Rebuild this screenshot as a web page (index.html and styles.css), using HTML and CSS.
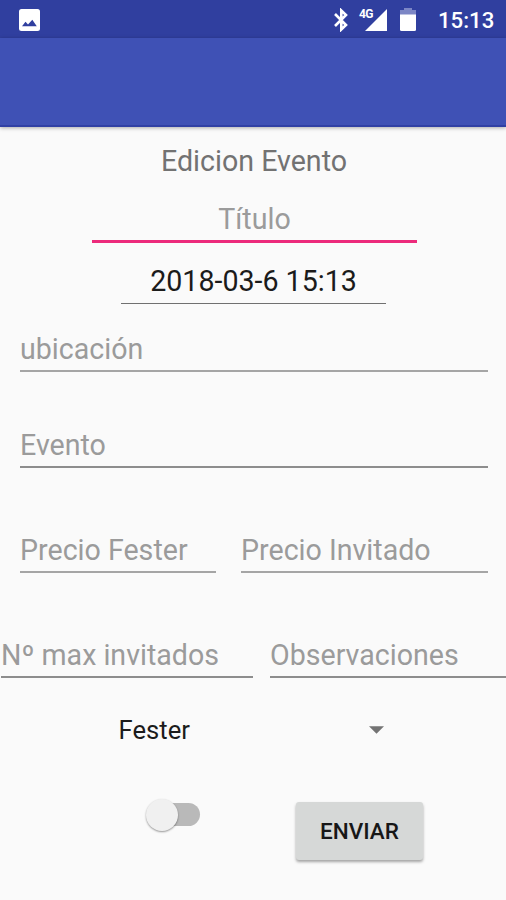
FILE: index.html
```html
<!DOCTYPE html>
<html lang="es">
<head>
<meta charset="utf-8">
<title>Edicion Evento</title>
<link rel="stylesheet" href="styles.css">
</head>
<body>
<header class="status">
  <svg class="photo" viewBox="0 0 21 22"><rect width="21" height="22" rx="2.5" fill="#fff"/><path d="M3 17.3 6.5 12.8 9 15.6 13.3 10.8 17.8 17.3Z" fill="#303f9f"/></svg>
  <div class="indicators">
    <svg class="bluetooth" viewBox="0 0 14 24"><path d="M1 6 12 17 7.3 21.5V2.5L12 7 1 18" fill="none" stroke="#fff" stroke-width="2.6"/></svg>
    <div class="signal"><span class="network">4G</span><svg class="bars" viewBox="0 0 22 22"><path d="M22 0V22H0Z" fill="#fff"/></svg></div>
    <svg class="battery" viewBox="0 0 16 23"><path d="M4 0H12V2H16V7H0V2H4Z" fill="#7c86c5"/><path d="M0 6.5H16V21.5Q16 23 14.5 23H1.5Q0 23 0 21.5Z" fill="#fff"/></svg>
    <time class="clock">15:13</time>
  </div>
</header>
<div class="toolbar"></div>
<main class="form">
  <h1 class="heading">Edicion Evento</h1>
  <div class="field title hint">Título</div>
  <div class="field date">2018-03-6 15:13</div>
  <div class="field location soft hint">ubicación</div>
  <div class="field event hint">Evento</div>
  <div class="row prices">
    <div class="field soft hint">Precio Fester</div>
    <div class="field soft hint">Precio Invitado</div>
  </div>
  <div class="row details">
    <div class="field guests hint">Nº max invitados</div>
    <div class="field hint">Observaciones</div>
  </div>
  <div class="spinner"><span>Fester</span><svg class="arrow" viewBox="0 0 16 8"><path d="M0 0H16L8 8Z" fill="#737373"/></svg></div>
  <div class="actions">
    <div class="switch"><div class="thumb"></div></div>
    <button class="send" type="button">ENVIAR</button>
  </div>
</main>
</body>
</html>
```
FILE: styles.css
```css
* { box-sizing: border-box; }
body {
  margin: 0;
  height: 900px;
  overflow: hidden;
  background: #fafafa;
  color: #1b1b1b;
  font-family: Roboto, sans-serif;
  font-size: 28.6px;
  line-height: 34px;
}
svg { display: block; flex: none; }
.status {
  height: 38px;
  padding: 0 12px 0 19px;
  display: flex;
  justify-content: space-between;
  background: #303f9f;
  color: #fff;
}
.photo { width: 21px; height: 22px; margin-top: 9px; }
.indicators { display: flex; align-items: flex-start; }
.bluetooth { width: 14px; height: 24px; margin: 8px 11px 0 0; }
.signal { display: flex; margin-top: 9px; }
.network {
  width: 14px;
  margin-right: -8px;
  font-size: 12px;
  line-height: 10px;
  font-weight: 700;
  letter-spacing: -0.7px;
}
.bars { width: 22px; height: 22px; }
.battery { width: 16px; height: 23px; margin: 8px 0 0 13px; }
.clock {
  width: 56px;
  margin: 3px 0 0 22px;
  font-size: 22.2px;
  font-weight: 500;
  white-space: nowrap;
}
.toolbar {
  height: 89px;
  background: #3f51b5;
  border-bottom: 2px solid #3040a4;
  box-shadow: 0 1px 4px rgba(0, 0, 0, .32);
}
.form { display: flex; flex-direction: column; padding-top: 17px; }
.heading {
  margin: 0;
  padding-left: 2px;
  text-align: center;
  font-size: 28.6px;
  font-weight: 400;
  color: #727272;
}
.field {
  padding-bottom: 4px;
  border-bottom: 2px solid #8d8d8d;
  white-space: nowrap;
}
.soft { border-bottom-color: #a5a5a5; }
.hint { color: #9b9b9b; }
.title {
  width: 325px;
  margin: 24px 0 0 92px;
  border-bottom: 3px solid #ec2a7b;
  text-align: center;
}
.date {
  width: 265px;
  margin: 21px 0 0 121px;
  padding-bottom: 5px;
  border-bottom-width: 1px;
  border-bottom-color: #707070;
  text-align: center;
}
.location { margin: 28px 18px 0 20px; }
.event { margin: 56px 18px 0 20px; }
.row { display: grid; }
.prices { grid-template-columns: 196px 247px; gap: 25px; margin: 65px 18px 0 20px; }
.details { grid-template-columns: 252px 236px; gap: 17px; margin: 65px 0 0 1px; }
.spinner {
  display: flex;
  align-items: center;
  justify-content: space-between;
  margin: 35px 122px 0 118.6px;
  font-size: 25.6px;
}
.arrow { width: 15px; height: 8px; margin-bottom: 1px; }
.actions {
  display: flex;
  align-items: flex-start;
  justify-content: space-between;
  margin: 55px 83px 0 145px;
}
.switch {
  width: 46px;
  height: 23px;
  margin: 1px 0 0 9px;
  border-radius: 12px;
  background: #b9b9b9;
}
.thumb {
  width: 32px;
  height: 32px;
  margin: -4px 0 0 -8px;
  border-radius: 50%;
  background: #f0f0f0;
  box-shadow: 0 1px 2px rgba(0, 0, 0, .4);
}
.send {
  width: 127px;
  height: 58px;
  padding: 0;
  border: 0;
  border-radius: 3px;
  background: #d6d8d7;
  box-shadow: 0 2px 3px rgba(0, 0, 0, .35);
  color: #171717;
  font: 500 22.5px/58px Roboto, sans-serif;
}
```
